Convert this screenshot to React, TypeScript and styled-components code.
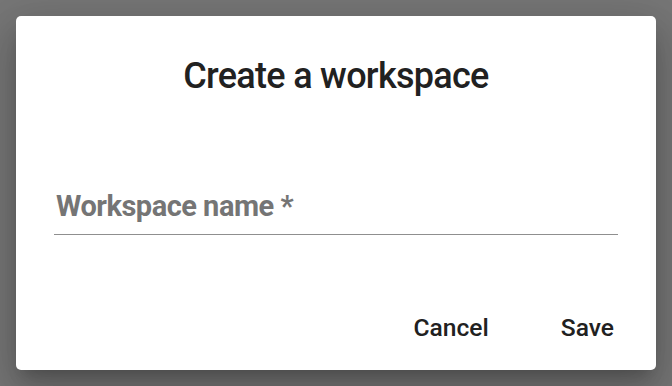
import React from "react";
import styled, { createGlobalStyle } from "styled-components";

const Global = createGlobalStyle`
  html, body { margin: 0; padding: 0; }
  body {
    width: 672px;
    height: 386px;
    overflow: hidden;
    background: #767676;
    font-family: Roboto, "Noto Sans", sans-serif;
  }
`;

const Backdrop = styled.div`
  width: 672px;
  height: 386px;
  padding: 16px;
  box-sizing: border-box;
`;

const Dialog = styled.div`
  width: 640px;
  height: 354px;
  box-sizing: border-box;
  background: #fff;
  border-radius: 5px;
  box-shadow: 0px 11px 15px -7px rgba(0,0,0,0.2), 0px 24px 38px 3px rgba(0,0,0,0.14), 0px 9px 46px 8px rgba(0,0,0,0.12);
  display: flex;
  flex-direction: column;
  padding: 38px 38px 22px 38px;
`;

const Title = styled.h2`
  margin: 0;
  text-align: center;
  font-size: 36px;
  font-weight: 500;
  line-height: 44px;
  color: #212121;
  letter-spacing: -0.7px;
`;

const Field = styled.label`
  display: block;
  margin-top: 90px;
  border-bottom: 1.5px solid #8f8f8f;
  padding-bottom: 10px;
`;

const Label = styled.span`
  display: block;
  font-size: 29px;
  font-weight: 700;
  line-height: 36px;
  letter-spacing: -0.5px;
  color: #757575;
  padding-left: 2px;
`;

const Actions = styled.div`
  margin-top: auto;
  display: flex;
  justify-content: flex-end;
  gap: 64px;
`;

const Button = styled.button`
  background: none;
  border: none;
  padding: 4px 4px;
  font-family: Roboto, sans-serif;
  font-size: 24.6px;
  font-weight: 500;
  line-height: 32px;
  color: #212121;
  cursor: pointer;
`;

export default function App() {
  return (
    <>
      <Global />
      <Backdrop>
        <Dialog>
          <Title>Create a workspace</Title>
          <Field>
            <Label>Workspace name *</Label>
          </Field>
          <Actions>
            <Button>Cancel</Button>
            <Button>Save</Button>
          </Actions>
        </Dialog>
      </Backdrop>
    </>
  );
}
